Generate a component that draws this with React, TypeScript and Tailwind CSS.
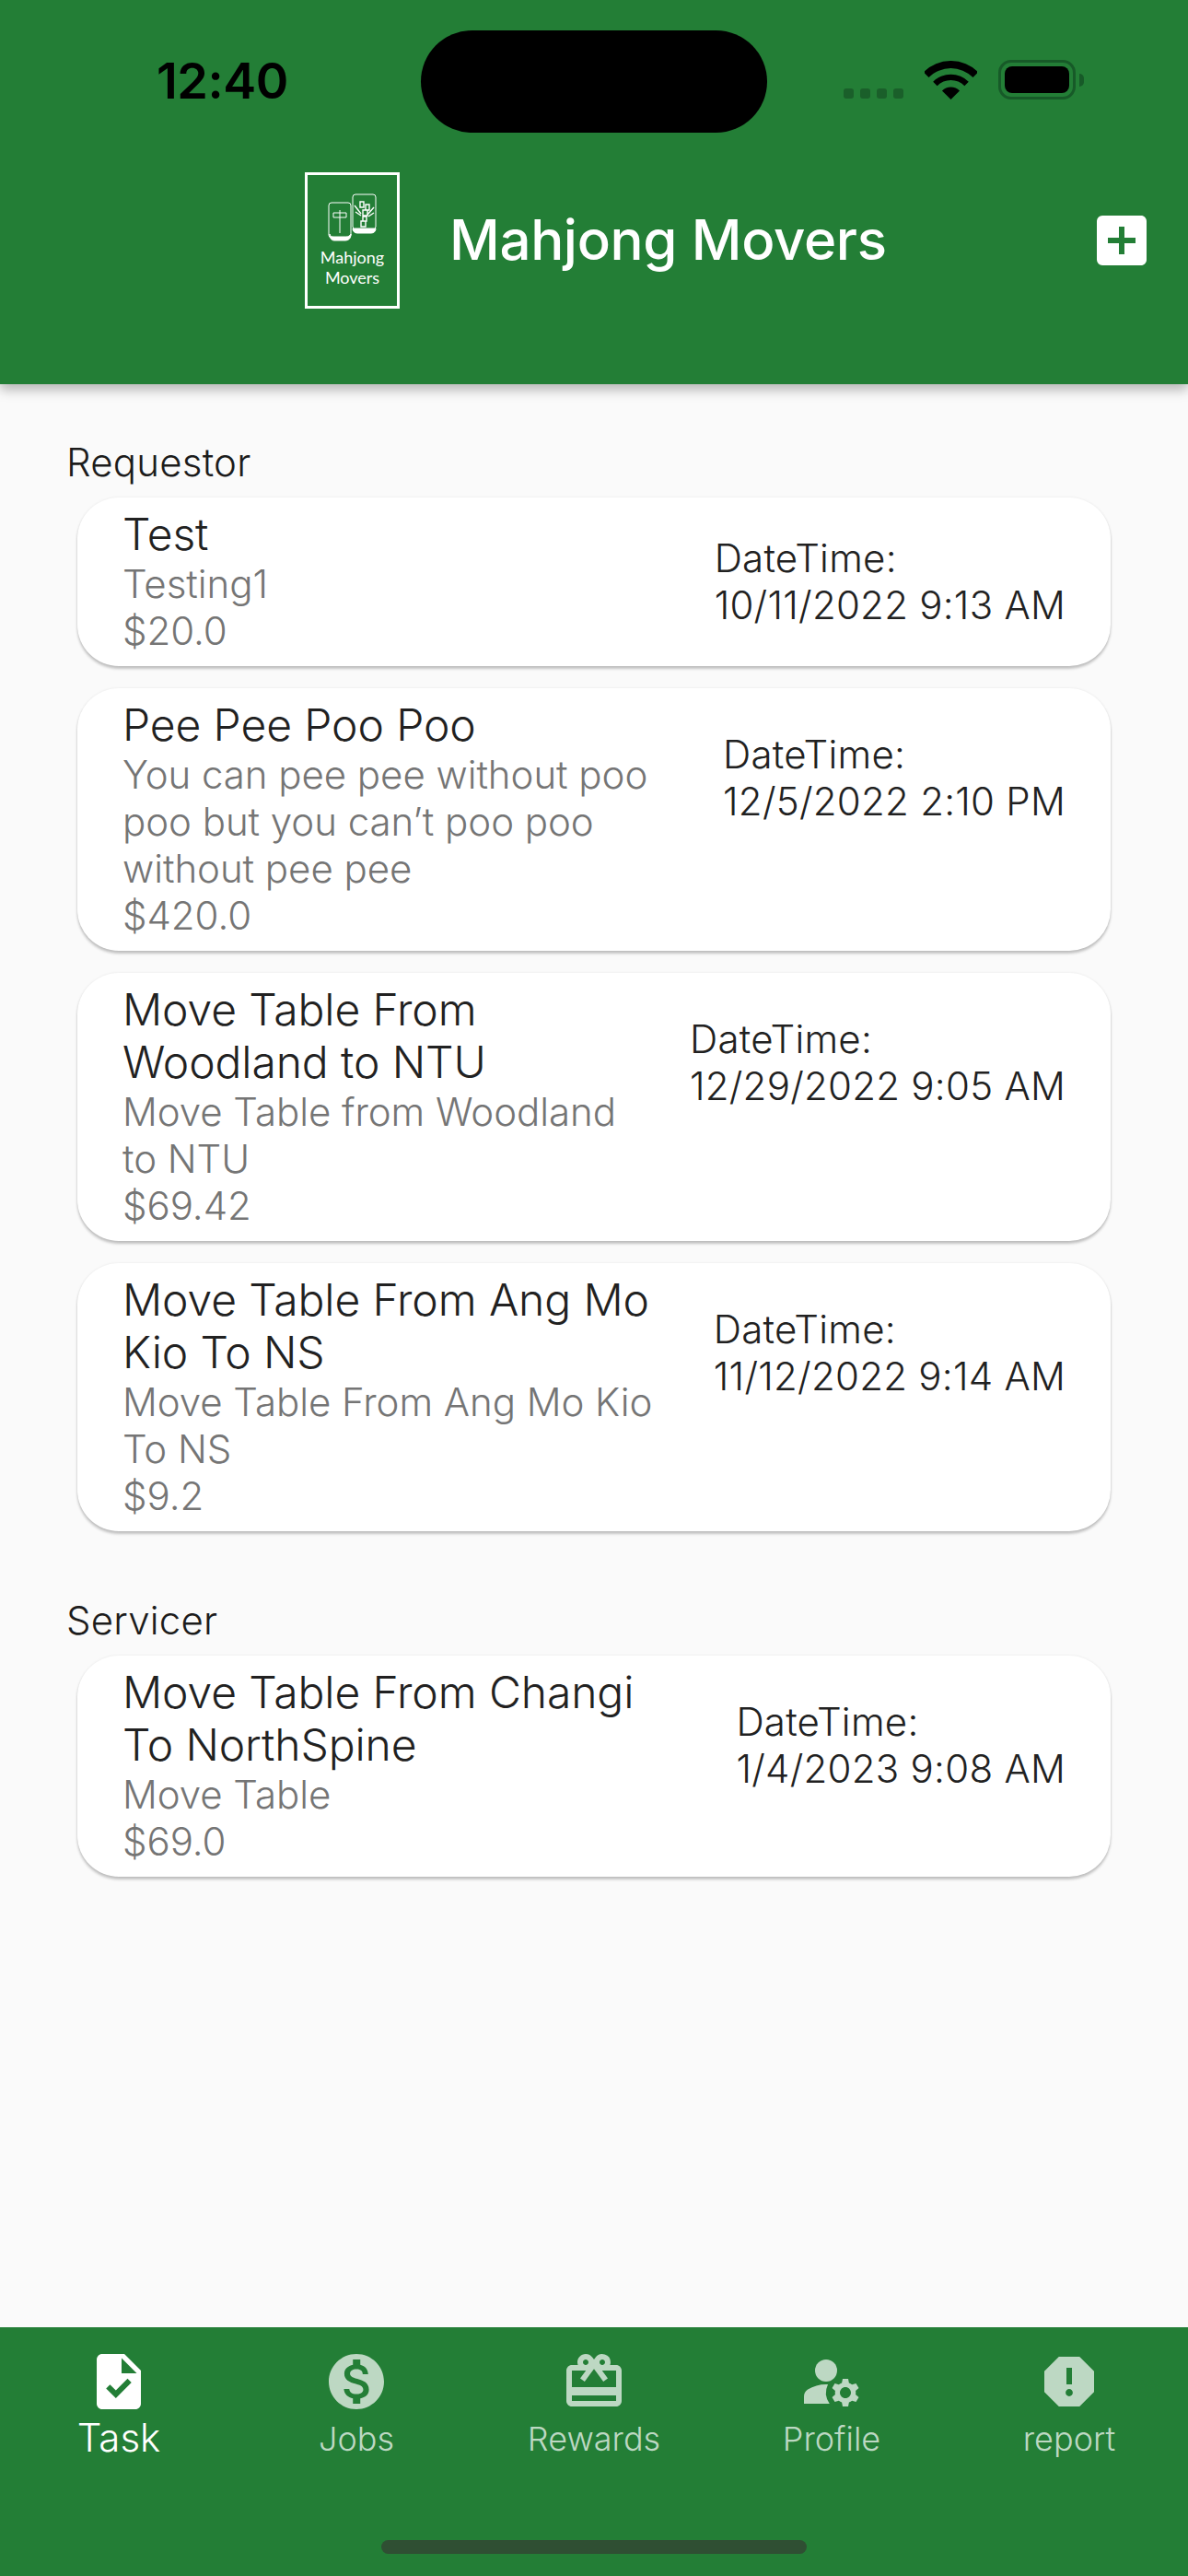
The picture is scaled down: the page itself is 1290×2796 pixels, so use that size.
import { MdAddBox, MdCardGiftcard, MdManageAccounts, MdMonetizationOn, MdReport, MdTask } from 'react-icons/md'
import type { IconType } from 'react-icons'

interface Job {
  title: string
  detail: string
  price: string
  date: string
  compact?: boolean
}

const requestorJobs: Job[] = [
  { title: 'Test', detail: 'Testing1', price: '$20.0', date: '10/11/2022 9:13 AM', compact: true },
  {
    title: 'Pee Pee Poo Poo',
    detail: 'You can pee pee without poo poo but you can’t poo poo without pee pee',
    price: '$420.0',
    date: '12/5/2022 2:10 PM',
  },
  {
    title: 'Move Table From Woodland to NTU',
    detail: 'Move Table from Woodland to NTU',
    price: '$69.42',
    date: '12/29/2022 9:05 AM',
  },
  {
    title: 'Move Table From Ang Mo Kio To NS',
    detail: 'Move Table From Ang Mo Kio To NS',
    price: '$9.2',
    date: '11/12/2022 9:14 AM',
  },
]

const servicerJobs: Job[] = [
  {
    title: 'Move Table From Changi To NorthSpine',
    detail: 'Move Table',
    price: '$69.0',
    date: '1/4/2023 9:08 AM',
  },
]

const tabs: { label: string; icon: IconType; active?: boolean }[] = [
  { label: 'Task', icon: MdTask, active: true },
  { label: 'Jobs', icon: MdMonetizationOn },
  { label: 'Rewards', icon: MdCardGiftcard },
  { label: 'Profile', icon: MdManageAccounts },
  { label: 'report', icon: MdReport },
]

function StatusBar() {
  return (
    <div className="relative flex h-[187px] items-start pl-[170px] pt-[58px]">
      <span className="font-['Inter'] text-[54px] leading-[60px] font-semibold tracking-[-0.5px] text-black">12:40</span>
      <div className="absolute left-[457px] top-[33px] h-[111px] w-[376px] rounded-full bg-black" />
      <div className="ml-auto mr-[113px] mt-[7px] flex items-end">
        <div className="mb-[1px] flex gap-[7px]">
          {[0, 1, 2, 3].map((dot) => (
            <div key={dot} className="h-[11px] w-[11px] rounded-[3px] bg-[#1a5f2a]" />
          ))}
        </div>
        <svg className="ml-[23px]" width="57" height="42" viewBox="0 0 57 42" fill="#000">
          <path d="M-1.2 12.3A42 42 0 0 1 58.2 12.3L52.5 18A34 34 0 0 0 4.5 18Z" />
          <path d="M9.2 22.7A27.3 27.3 0 0 1 47.8 22.7L43.35 27.15A21 21 0 0 0 13.65 27.15Z" />
          <path d="M18.95 32.45A13.5 13.5 0 0 1 38.05 32.45L28.5 42Z" />
        </svg>
        <div className="ml-[23px] h-[43px] w-[84px] rounded-[14px] border-[3px] border-[#175a28] p-[4px]">
          <div className="h-full w-full rounded-[8px] bg-black" />
        </div>
        <div className="mb-[14px] ml-[4px] h-[14px] w-[5px] rounded-r-full bg-[#175a28]" />
      </div>
    </div>
  )
}

function Logo() {
  return (
    <div className="flex h-[148px] w-[103px] shrink-0 flex-col items-center border-[3px] border-white pt-[20px] font-['Lato'] text-[18px] leading-[22px] text-white">
      <svg width="54" height="52" viewBox="0 0 54 52" fill="none" stroke="#fff" strokeWidth="1">
        <rect x="1" y="10" width="24" height="38" rx="3" />
        <path d="M2 44c0 3 1 7 5 7h12c3 0 6-2 6-6v-1c-1 2-3 3-5 3H6c-2 0-4-1-4-3Z" fill="#fff" />
        <rect x="27" y="1" width="25" height="38" rx="3" />
        <path d="M27 38c0 3 2 5 5 5h15c3 0 5-2 5-5Z" fill="#fff" />
        <path d="M6 21h14v5H6ZM13 18v25" />
        <path d="M35 9h4v6h-4ZM41 12h4v6h-4ZM38 18h5v6h-5ZM38 25h4v5h-4ZM36 30h5v6h-5Z" fill="none" strokeWidth="1.4" />
        <path d="M29 13l7 9M30 20l6 4M50 15l-7 8M50 21l-6 4" strokeWidth="1.4" />
      </svg>
      <span className="mt-[6px]">Mahjong</span>
      <span>Movers</span>
    </div>
  )
}

function JobCard({ job }: { job: Job }) {
  return (
    <div className="flex items-start rounded-[45px] bg-white pb-[12px] pl-[49px] pr-[49px] pt-[11px] shadow-[0_3px_3px_rgba(0,0,0,0.22),0_0_3px_rgba(0,0,0,0.08)]">
      <div className="min-w-0 flex-1 pr-[50px]">
        <div className="text-[48px] leading-[57px] font-[350] tracking-[-0.1px] text-[#212121]">{job.title}</div>
        <div className="text-[42px] leading-[51px] font-[350] tracking-[-0.05px] text-[#757575]">{job.detail}</div>
        <div className="text-[42px] leading-[52px] font-[350] tracking-[-0.05px] text-[#757575]">{job.price}</div>
      </div>
      <div className={`shrink-0 text-[42px] leading-[51px] font-[350] tracking-[0.25px] text-[#212121] ${job.compact ? 'self-center' : 'mt-[35px]'}`}>
        <div>DateTime:</div>
        <div>{job.date}</div>
      </div>
    </div>
  )
}

function JobSection({ label, jobs }: { label: string; jobs: Job[] }) {
  return (
    <section>
      <div className="pl-[72px] text-[42px] leading-[51px] font-[350] tracking-[0.2px] text-[#1c1c1c]">{label}</div>
      <div className="mt-[13px] flex flex-col gap-[24px] pl-[84px] pr-[84px]">
        {jobs.map((job) => (
          <JobCard key={job.title} job={job} />
        ))}
      </div>
    </section>
  )
}

export default function App() {
  return (
    <div className="flex h-[2796px] w-[1290px] flex-col overflow-hidden bg-[#fafafa] font-['Inter',sans-serif]">
      <header className="relative z-10 h-[417px] shrink-0 bg-[#237e36] shadow-[0_6px_12px_rgba(0,0,0,0.28)]">
        <StatusBar />
        <div className="flex items-start pl-[331px] pr-[36px]">
          <Logo />
          <h1 className="ml-[54px] mt-[38px] text-[60px] leading-[70px] font-medium tracking-[-0.35px] text-white">Mahjong Movers</h1>
          <MdAddBox className="ml-auto mt-[38px] text-white" size={72} />
        </div>
      </header>

      <main className="flex flex-1 flex-col gap-[71px] pt-[59px]">
        <JobSection label="Requestor" jobs={requestorJobs} />
        <JobSection label="Servicer" jobs={servicerJobs} />
      </main>

      <nav className="relative h-[270px] shrink-0 bg-[#237e36]">
        <div className="grid grid-cols-5 pt-[23px]">
          {tabs.map(({ label, icon: Icon, active }) => (
            <div key={label} className={`flex flex-col items-center ${active ? 'text-white' : 'text-[#bdd8c3]'}`}>
              <Icon size={72} />
              <span className={active ? 'text-[42px] leading-[50px] font-[350]' : 'mt-[1px] text-[36px] leading-[50px] font-[350]'}>{label}</span>
            </div>
          ))}
        </div>
        <div className="absolute bottom-[24px] left-[414px] h-[15px] w-[462px] rounded-full bg-[#2f4f33]" />
      </nav>
    </div>
  )
}
